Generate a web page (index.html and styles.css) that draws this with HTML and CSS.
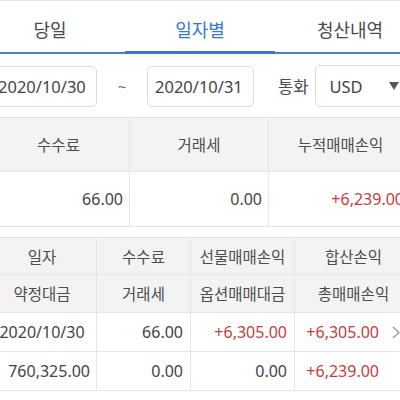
FILE: index.html
```html
<!DOCTYPE html>
<html lang="ko">
<head>
<meta charset="utf-8">
<link rel="stylesheet" href="styles.css">
</head>
<body>
<div class="screen">
  <div class="tabs">
    <div class="tab">당일</div>
    <div class="tab active">일자별</div>
    <div class="tab">청산내역</div>
  </div>
  <div class="filter">
    <div class="date-box first">2020/10/30</div>
    <span class="tilde">~</span>
    <div class="date-box">2020/10/31</div>
    <span class="label">통화</span>
    <div class="select">
      <span>USD</span>
      <svg class="caret" width="10" height="8" viewBox="0 0 10 8"><polygon points="0,0 10,0 5,8" fill="#555"/></svg>
    </div>
  </div>
  <div class="summary">
    <div class="cell head">수수료</div>
    <div class="cell head">거래세</div>
    <div class="cell head">누적매매손익</div>
    <div class="cell num">66.00</div>
    <div class="cell num">0.00</div>
    <div class="cell num red">+6,239.00</div>
  </div>
  <div class="detail">
    <div class="cell head">일자</div>
    <div class="cell head">수수료</div>
    <div class="cell head">선물매매손익</div>
    <div class="cell head">합산손익</div>
    <div class="cell head">약정대금</div>
    <div class="cell head">거래세</div>
    <div class="cell head">옵션매매대금</div>
    <div class="cell head">총매매손익</div>

    <div class="cell center">2020/10/30</div>
    <div class="cell num">66.00</div>
    <div class="cell num red">+6,305.00</div>
    <div class="cell num last red"><span>+6,305.00</span><svg class="chev" width="8" height="13" viewBox="0 0 8 13"><polyline points="1,1 7,6.5 1,12" fill="none" stroke="#9a9a9a" stroke-width="1.3"/></svg></div>

    <div class="cell num">760,325.00</div>
    <div class="cell num">0.00</div>
    <div class="cell num">0.00</div>
    <div class="cell num last red"><span>+6,239.00</span><span class="chev-space"></span></div>
  </div>
</div>
</body>
</html>
```

FILE: styles.css
```css
html, body {
  margin: 0;
  padding: 0;
}
body {
  width: 400px;
  height: 400px;
  overflow: hidden;
  background: #fff;
  font-family: "Noto Sans", "Noto Sans CJK KR", sans-serif;
  color: #444;
}
.screen {
  margin-left: -12px;
  width: 424px;
}
.tabs {
  margin-left: -13px;
  width: 450px;
  display: grid;
  grid-template-columns: 150px 150px 150px;
  border-top: 1px solid #e4e4e4;
  border-bottom: 2px solid #4a80d2;
}
.tab {
  position: relative;
  height: 51px;
  box-sizing: border-box;
  padding-top: 5px;
  display: flex;
  align-items: center;
  justify-content: center;
  font-size: 18px;
  color: #4a4a4a;
}
.tab.active {
  color: #3a78d0;
}
.tab.active::after {
  content: "";
  position: absolute;
  left: 0;
  right: 0;
  bottom: -2px;
  height: 3px;
  background: #3a78d0;
}
.filter {
  display: flex;
  align-items: center;
  padding: 11px 0 10px;
}
.date-box {
  width: 107px;
  height: 41px;
  box-sizing: border-box;
  border: 1px solid #dcdcdc;
  border-radius: 5px;
  padding-left: 7px;
  display: flex;
  align-items: center;
  font-size: 16.5px;
  color: #444;
}
.date-box.first {
  margin-left: 2px;
}
.tilde {
  width: 50px;
  text-align: center;
  font-size: 15px;
  color: #666;
}
.label {
  margin-left: 24px;
  font-size: 16.5px;
  color: #4a4a4a;
}
.select {
  margin-left: 7px;
  width: 96px;
  height: 42px;
  box-sizing: border-box;
  border: 1px solid #dcdcdc;
  border-radius: 5px;
  padding: 0 11px 0 13px;
  display: flex;
  align-items: center;
  justify-content: space-between;
  font-size: 16.5px;
  color: #444;
}
.summary {
  display: grid;
  grid-template-columns: 141px 140px 143px;
  grid-auto-rows: 54px;
  border-top: 1px solid #e2e2e2;
  border-bottom: 1px solid #e2e2e2;
}
.summary .cell:nth-child(-n+3) {
  border-bottom: 1px solid #e6e6e6;
}
.summary .cell:nth-child(3n+2) {
  border-left: 1px solid #e6e6e6;
  border-right: 1px solid #e6e6e6;
}
.summary .cell.num {
  padding-right: 6px;
}
.summary .cell:last-child {
  padding-right: 8px;
}
.cell {
  display: flex;
  align-items: center;
  box-sizing: border-box;
}
.cell.head {
  justify-content: center;
  background: #f3f3f3;
  font-size: 15.5px;
  color: #4d4d4d;
}
.cell.num {
  justify-content: flex-end;
  font-size: 16px;
  color: #444;
}
.cell.center {
  justify-content: center;
  font-size: 16px;
  color: #444;
}
.cell.red {
  color: #c43d3d;
}
.detail {
  margin-top: 10px;
  display: grid;
  grid-template-columns: 108px 94px 104px 118px;
  grid-template-rows: 37px 38px 39px 39px;
  border-top: 1px solid #e2e2e2;
}
.detail .cell {
  border-bottom: 1px solid #e6e6e6;
}
.detail .cell:nth-child(4n+2),
.detail .cell:nth-child(4n+3),
.detail .cell:nth-child(4n+4) {
  border-left: 1px solid #e6e6e6;
}
.detail .cell.num {
  padding-right: 7px;
}
.detail .cell:nth-child(13) {
  padding-right: 6px;
}
.detail .cell.num.last {
  padding-right: 12px;
}
.chev {
  margin-left: 13px;
  flex: none;
}
.chev-space {
  width: 21px;
  flex: none;
}
```
